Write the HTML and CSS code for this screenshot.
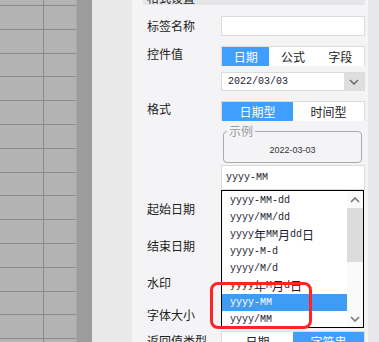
FILE: index.html
```html
<!DOCTYPE html>
<html lang="zh-CN">
<head>
    <meta charset="UTF-8">
    <meta name="viewport" content="width=device-width, initial-scale=1.0">
    <title>日期控件属性</title>
    <link rel="stylesheet" href="styles.css">
</head>
<body>

<div class="screen">
    <div class="sheet"></div>
    <div class="sheet-scroll"></div>
    <div class="gutter"></div>

    <div class="panel">
        <div class="panel-head"><span>格式设置</span></div>

        <div class="row row-first">
            <div class="row-label tall">标签名称</div>
            <div class="row-ctl">
                <div class="input"></div>
            </div>
        </div>

        <div class="row row-gap">
            <div class="row-label">控件值</div>
            <div class="row-ctl">
                <div class="seg">
                    <span class="on">日期</span>
                    <span>公式</span>
                    <span>字段</span>
                </div>
                <div class="select">
                    <span class="select-text">2022/03/03</span>
                    <span class="select-arrow">
                        <svg width="10" height="6" viewBox="0 0 10 6"><polyline points="1,1 5,5 9,1" fill="none" stroke="#666" stroke-width="1.4"/></svg>
                    </span>
                </div>
            </div>
        </div>

        <div class="row row-gap">
            <div class="row-label">格式</div>
            <div class="row-ctl dropdown-host">
                <div class="seg">
                    <span class="on">日期型</span>
                    <span>时间型</span>
                </div>
                <fieldset class="sample">
                    <legend>示例</legend>
                    <div class="sample-text">2022-03-03</div>
                </fieldset>
                <div class="input input-format">yyyy-MM</div>

                <div class="dropdown">
                    <ul class="options">
                        <li>yyyy-MM-dd</li>
                        <li>yyyy/MM/dd</li>
                        <li>yyyy<span class="cjk">年</span>MM<span class="cjk">月</span>dd<span class="cjk">日</span></li>
                        <li>yyyy-M-d</li>
                        <li>yyyy/M/d</li>
                        <li>yyyy<span class="cjk">年</span>M<span class="cjk">月</span>d<span class="cjk">日</span></li>
                        <li class="selected">yyyy-MM</li>
                        <li>yyyy/MM</li>
                    </ul>
                    <div class="scrollbar">
                        <span class="scroll-btn">
                            <svg width="10" height="6" viewBox="0 0 10 6"><polyline points="1,5 5,1 9,5" fill="none" stroke="#777" stroke-width="1.6"/></svg>
                        </span>
                        <span class="scroll-thumb"></span>
                        <span class="scroll-track"></span>
                        <span class="scroll-btn">
                            <svg width="10" height="6" viewBox="0 0 10 6"><polyline points="1,1 5,5 9,1" fill="none" stroke="#777" stroke-width="1.6"/></svg>
                        </span>
                    </div>
                </div>
            </div>
        </div>

        <div class="row row-start">
            <div class="row-label tall">起始日期</div>
        </div>
        <div class="row row-loose">
            <div class="row-label tall">结束日期</div>
        </div>
        <div class="row row-loose">
            <div class="row-label tall">水印</div>
        </div>
        <div class="row row-mid">
            <div class="row-label tall">字体大小</div>
        </div>
        <div class="row row-last">
            <div class="row-label tall">返回值类型</div>
            <div class="row-ctl">
                <div class="seg">
                    <span>日期</span>
                    <span class="on">字符串</span>
                </div>
            </div>
        </div>
    </div>

    <div class="panel-edge"></div>

    <div class="mark"></div>
</div>

</body>
</html>
```

FILE: styles.css
```css
body { margin: 0; font-family: "Noto Sans CJK SC", "Noto Sans", sans-serif; color: #222; background: #e9e9e9; overflow: hidden; }
.screen { position: relative; display: flex; width: 379px; height: 342px; overflow: hidden; }

/* dimmed spreadsheet on the left */
.sheet { width: 76px; flex-shrink: 0; background: linear-gradient(to right, transparent 43px, #8a8a8a 43px 44px, transparent 44px), repeating-linear-gradient(to bottom, #8a8a8a 0 1px, transparent 1px 23.8px) 0 5px, #b3b3b3; }
.sheet-scroll { width: 15px; flex-shrink: 0; background: #9c9c9c; border-left: 1px solid #a8a8a8; }
.gutter { width: 40px; flex-shrink: 0; background: #e9e9e9; }
.panel-edge { flex: 1; background: #e8e8ea; }

/* property panel */
.panel { width: 236px; flex-shrink: 0; box-sizing: border-box; padding: 0 3px 0 15px; background: #f4f4f6; display: flex; flex-direction: column; }
.panel > * { flex-shrink: 0; }
.panel-head { height: 5px; margin-left: -4px; background: #e6e6e8; overflow: hidden; }
.panel-head span { display: block; margin-top: -8px; padding-left: 4px; font-size: 12px; line-height: 12px; }

.row { display: flex; }
.row-first { margin-top: 11px; }
.row-gap { margin-top: 10px; }
.row-start { margin-top: 9px; }
.row-loose { margin-top: 17px; }
.row-mid { margin-top: 12px; }
.row-last { margin-top: 6px; }
.row-label { width: 74px; flex-shrink: 0; font-size: 12px; line-height: 16px; white-space: nowrap; }
.row-label.tall { line-height: 20px; }
.row-ctl { width: 144px; display: flex; flex-direction: column; }

.input { height: 20px; box-sizing: border-box; background: #fff; border: 1px solid #dcdcdc; font: 10px "Liberation Mono", monospace; color: #1c1c30; padding-left: 4px; line-height: 18px; }
.input-format { height: 25px; margin-top: 2px; line-height: 23px; }

.seg { display: flex; height: 20px; box-sizing: border-box; border: 1px solid #dcdcdc; border-bottom: 0; background: #fff; }
.seg span { flex: 1; text-align: center; font-size: 12px; line-height: 19px; }
.seg .on { background: #409eff; color: #fff; }

.select { display: flex; height: 19px; margin-top: 6px; box-sizing: border-box; background: #fff; border: 1px solid #dcdcdc; }
.select-text { flex: 1; padding-left: 6px; font: 10px/17px "Liberation Mono", monospace; color: #1c1c30; }
.select-arrow { width: 20px; background: #dedede; display: flex; align-items: center; justify-content: center; }

.sample { margin: 4px 3px 0 2px; padding: 0; border: 1px solid #ababab; border-radius: 4px; min-width: 0; }
.sample legend { margin-left: 3px; padding: 0 2px; font-size: 12px; line-height: 12px; color: #9a9a9a; }
.sample-text { height: 24px; padding-top: 1px; text-align: center; font: 9px/24px "Liberation Sans", sans-serif; color: #333; }

/* open format dropdown */
.dropdown-host { position: relative; }
.dropdown { position: absolute; top: 100%; left: 0; width: 143px; height: 138px; box-sizing: border-box; border: 1px solid #000; background: #fff; display: flex; z-index: 2; }
.options { list-style: none; margin: 0; padding: 1px 0 0; flex: 1; }
.options li { display: flex; align-items: center; height: 17px; padding-left: 8px; font: 10px "Liberation Mono", monospace; color: #1c1c30; white-space: nowrap; overflow: hidden; }
.options li.selected { background: #3f9cf4; color: #fff; }
.cjk { font-family: "Noto Sans CJK SC", sans-serif; font-size: 12px; line-height: 12px; }
.scrollbar { width: 16px; display: flex; flex-direction: column; background: #fafafa; }
.scroll-btn { height: 17px; display: flex; align-items: center; justify-content: center; }
.scroll-thumb { height: 54px; background: #dcdcdc; }
.scroll-track { flex: 1; }

/* red annotation box */
.mark { position: absolute; left: 210px; top: 282px; width: 102px; height: 47px; box-sizing: border-box; border: 3px solid #ff2424; border-radius: 8px; z-index: 3; }
```
